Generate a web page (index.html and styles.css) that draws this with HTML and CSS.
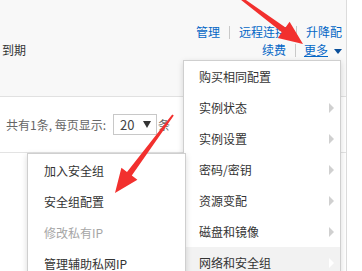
FILE: index.html
```html
<!DOCTYPE html>
<html lang="zh-CN">
<head>
  <meta charset="UTF-8">
  <title>实例列表</title>
  <link rel="stylesheet" href="styles.css">
</head>
<body>
  <div class="panel">
    <div class="top">
      <div class="cell-date">到期</div>
      <div class="ops">
        <div class="ops-row">
          <a>管理</a><span class="sep"></span><a>远程连接</a><span class="sep"></span><a>升降配</a>
        </div>
        <div class="ops-row">
          <a>续费</a><span class="sep sep-small"></span><a class="more">更多</a><span class="caret"></span>
        </div>
      </div>
    </div>

    <div class="pager">
      <span>共有1条, 每页显示:</span>
      <span class="select">20<i class="select-caret"></i></span>
      <span>条</span>
    </div>
    <div class="table-head"></div>
  </div>

  <ul class="menu">
    <li>购买相同配置</li>
    <li class="has-sub">实例状态</li>
    <li class="has-sub">实例设置</li>
    <li class="has-sub">密码/密钥</li>
    <li class="has-sub">资源变配</li>
    <li class="has-sub">磁盘和镜像</li>
    <li class="has-sub active">网络和安全组</li>
  </ul>

  <ul class="submenu">
    <li>加入安全组</li>
    <li>安全组配置</li>
    <li class="disabled">修改私有IP</li>
    <li>管理辅助私网IP</li>
  </ul>

  <svg class="marks" width="362" height="271" viewBox="0 0 362 271">
    <polygon points="237.3,-3.0 238.7,-5.0 285.5,27.4 289.6,21.7 303,44 277.8,37.9 281.9,32.2"/>
    <polygon points="172.2,114.4 173.8,115.6 131.8,175.5 137.4,179.7 115,193 121.4,167.7 127.0,171.9"/>
  </svg>
</body>
</html>
```

FILE: styles.css
```css
body {
  margin: 0;
  background: #fff;
  font-family: "Noto Sans CJK SC", "Liberation Sans", sans-serif;
  font-size: 12px;
  color: #333;
  width: 362px;
  height: 271px;
  overflow: hidden;
  position: relative;
}

.panel {
  width: 346px;
  height: 271px;
  border-right: 1px solid #dcdcdc;
}

.top {
  display: flex;
  justify-content: space-between;
  height: 96px;
  background: #f8f8f8;
  border-bottom: 1px solid #e1e1e1;
}

.cell-date {
  padding: 41px 0 0 2px;
  line-height: 18px;
  color: #333;
}

.ops {
  padding: 23px 4px 0 0;
  display: flex;
  flex-direction: column;
  align-items: flex-end;
}

.ops-row {
  display: flex;
  align-items: center;
  height: 18px;
  line-height: 18px;
}

.ops a {
  color: #0567c6;
}

.sep {
  width: 1px;
  height: 13px;
  margin: 0 9px;
  background: #c9c9c9;
}

.sep-small {
  margin: 0 8px 0 9px;
}

.ops a.more {
  text-decoration: underline;
}

.caret {
  width: 0;
  height: 0;
  margin: 2px 0 0 6px;
  border-left: 4px solid transparent;
  border-right: 4px solid transparent;
  border-top: 5px solid #0a4f9a;
}

.pager {
  display: flex;
  align-items: center;
  height: 55px;
  padding-left: 6px;
  color: #666;
}

.select {
  display: flex;
  align-items: center;
  justify-content: space-between;
  box-sizing: border-box;
  width: 44px;
  height: 21px;
  margin: 0 1px 0 7px;
  padding: 0 5px 0 6px;
  border: 1px solid #c8c8c8;
  background: #fff;
  color: #444;
  font-size: 13px;
}

.select-caret {
  width: 0;
  height: 0;
  border-left: 4px solid transparent;
  border-right: 4px solid transparent;
  border-top: 7px solid #333;
}

.table-head {
  border-top: 1px solid #e3e3e3;
}

.menu, .submenu {
  list-style: none;
  margin: 0;
  position: absolute;
  background: #fff;
  border: 1px solid #cfcfcf;
  box-shadow: 0 2px 6px rgba(0, 0, 0, 0.15);
}

.menu {
  left: 183px;
  top: 60px;
  width: 156px;
  padding: 0;
}

.menu li, .submenu li {
  height: 31px;
  line-height: 31px;
  color: #333;
  position: relative;
}

.menu li {
  padding-left: 15px;
}

.menu li.active {
  background: #f2f2f2;
}

.has-sub::after {
  content: "";
  position: absolute;
  right: 6px;
  top: 11px;
  border-top: 5px solid transparent;
  border-bottom: 5px solid transparent;
  border-left: 5px solid #d0d0d0;
}

.menu li.active::after {
  border-left-color: #fff;
}

.submenu {
  left: 27px;
  top: 153px;
  width: 157px;
  padding: 1px 0 0;
}

.submenu li {
  padding-left: 16px;
}

.submenu li.disabled {
  color: #a6a6a6;
}

.marks {
  position: absolute;
  left: 0;
  top: 0;
  fill: #f2302e;
}
```
